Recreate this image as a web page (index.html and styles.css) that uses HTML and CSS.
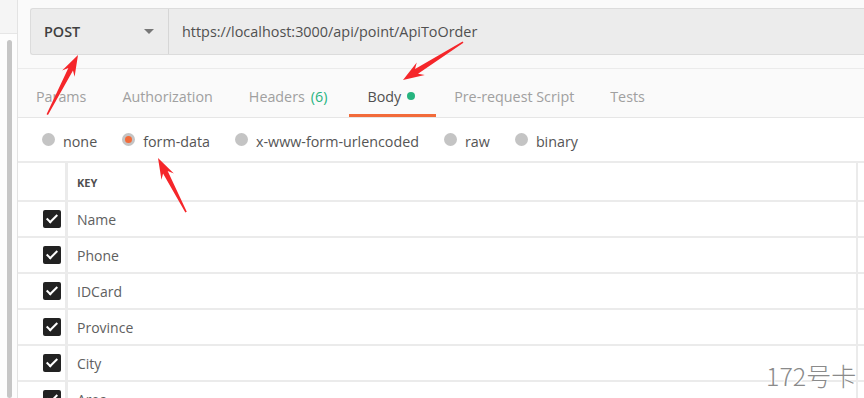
FILE: index.html
```html
<!DOCTYPE html>
<html lang="en">
<head>
    <meta charset="UTF-8">
    <title>Postman - Body</title>
    <link rel="stylesheet" href="styles.css">
</head>
<body>
    <div class="app">
        <div class="sidebar">
            <div class="sidebar-top"></div>
            <div class="scrollbar"></div>
        </div>

        <div class="main">
            <div class="request-bar">
                <div class="method">
                    <span>POST</span>
                    <span class="caret"></span>
                </div>
                <div class="url">https://localhost:3000/api/point/ApiToOrder</div>
            </div>

            <div class="tabs">
                <div class="tab">Params</div>
                <div class="tab">Authorization</div>
                <div class="tab">Headers <span class="count">(6)</span></div>
                <div class="tab active">Body <span class="dot"></span></div>
                <div class="tab">Pre-request Script</div>
                <div class="tab">Tests</div>
            </div>

            <div class="body-types">
                <label class="radio"><span class="circle"></span>none</label>
                <label class="radio checked"><span class="circle"></span>form-data</label>
                <label class="radio"><span class="circle"></span>x-www-form-urlencoded</label>
                <label class="radio"><span class="circle"></span>raw</label>
                <label class="radio"><span class="circle"></span>binary</label>
            </div>

            <div class="table">
                <div class="row head">
                    <div class="check-cell"></div>
                    <div class="key-cell">KEY</div>
                    <div class="value-cell"></div>
                </div>
                <div class="row">
                    <div class="check-cell"><span class="checkbox"></span></div>
                    <div class="key-cell">Name</div>
                    <div class="value-cell"></div>
                </div>
                <div class="row">
                    <div class="check-cell"><span class="checkbox"></span></div>
                    <div class="key-cell">Phone</div>
                    <div class="value-cell"></div>
                </div>
                <div class="row">
                    <div class="check-cell"><span class="checkbox"></span></div>
                    <div class="key-cell">IDCard</div>
                    <div class="value-cell"></div>
                </div>
                <div class="row">
                    <div class="check-cell"><span class="checkbox"></span></div>
                    <div class="key-cell">Province</div>
                    <div class="value-cell"></div>
                </div>
                <div class="row">
                    <div class="check-cell"><span class="checkbox"></span></div>
                    <div class="key-cell">City</div>
                    <div class="value-cell"></div>
                </div>
                <div class="row">
                    <div class="check-cell"><span class="checkbox"></span></div>
                    <div class="key-cell">Area</div>
                    <div class="value-cell"></div>
                </div>
            </div>
        </div>
    </div>

    <!-- annotation arrows drawn over the screenshot -->
    <svg class="arrows" width="864" height="398" viewBox="0 0 864 398">
        <g transform="translate(78 55) rotate(-62.7)">
            <polygon points="0,0 -21,-7 -16,-2.6 -67,-0.8 -67,0.8 -16,2.6 -21,7"/>
        </g>
        <g transform="translate(403 80) rotate(147.7)">
            <polygon points="0,0 -21,-7.5 -16,-2.8 -71,-0.8 -71,0.8 -16,2.8 -21,7.5"/>
        </g>
        <g transform="translate(158 158) rotate(-117.4)">
            <polygon points="0,0 -21,-7 -16,-2.6 -61,-0.8 -61,0.8 -16,2.6 -21,7"/>
        </g>
    </svg>

    <div class="watermark">172号卡</div>
</body>
</html>
```

FILE: styles.css
```css
body {
    margin: 0;
    width: 864px;
    height: 398px;
    overflow: hidden;
    font-family: 'Open Sans', 'Liberation Sans', sans-serif;
    font-size: 14px;
    color: #505050;
    background-color: #fafafa;
    position: relative;
}
.app {
    display: flex;
    height: 398px;
    overflow: hidden;
}
.sidebar {
    width: 17px;
    flex-shrink: 0;
    border-right: 1px solid #e3e3e3;
    background-color: #fdfdfd;
}
.sidebar-top {
    height: 33px;
    background-color: #f5f5f5;
    border-bottom: 1px solid #e6e6e6;
}
.scrollbar {
    width: 5px;
    height: 358px;
    margin: 6px 0 0 7px;
    border-radius: 3px;
    background-color: #c6c6c6;
}
.main {
    flex: 1;
    min-width: 0;
    background-color: #fafafa;
}

/* request bar */
.request-bar {
    display: flex;
    height: 45px;
    margin: 8px 0 0 12px;
    border: 1px solid #dcdcdc;
    border-right: none;
    border-radius: 3px 0 0 3px;
    background-color: #ececec;
}
.method {
    width: 138px;
    flex-shrink: 0;
    display: flex;
    align-items: center;
    justify-content: space-between;
    padding: 0 14px 0 13px;
    box-sizing: border-box;
    border-right: 1px solid #d6d6d6;
    color: #404040;
    font-size: 14.4px;
    font-weight: 600;
}
.caret {
    width: 0;
    height: 0;
    border-left: 5px solid transparent;
    border-right: 5px solid transparent;
    border-top: 5px solid #777;
}
.url {
    display: flex;
    align-items: center;
    padding-left: 13px;
    color: #505050;
    font-size: 14.4px;
    white-space: nowrap;
}

/* tabs */
.tabs {
    display: flex;
    height: 48px;
    margin-top: 13px;
    border-top: 1px solid #ebebeb;
    border-bottom: 1px solid #e6e6e6;
}
.tab {
    display: flex;
    align-items: center;
    gap: 6px;
    padding: 9px 18px 0;
    color: #a0a0a0;
    font-size: 14.3px;
    white-space: nowrap;
    border-bottom: 3px solid transparent;
}
.tab .count {
    color: #26b47f;
}
.tab.active {
    color: #505050;
    margin-left: 4px;
    padding-right: 21px;
    border-bottom-color: #f26b3a;
}
.dot {
    width: 8px;
    height: 8px;
    border-radius: 50%;
    background-color: #26b47f;
}

/* body types */
.body-types {
    display: flex;
    align-items: center;
    gap: 25px;
    height: 45px;
    padding: 3px 0 0 24px;
    box-sizing: border-box;
    background-color: #fff;
    border-bottom: 2px solid #ebebeb;
}
.radio {
    display: flex;
    align-items: center;
    gap: 8px;
    color: #555;
    font-size: 14.3px;
}
.circle {
    width: 13px;
    height: 13px;
    margin-top: -4px;
    border-radius: 50%;
    background-color: #c4c4c4;
    box-sizing: border-box;
}
.radio.checked .circle {
    border: 3px solid #c4c4c4;
    background-color: #f26b3a;
}

/* key/value table */
.table {
    background-color: #fff;
}
.row {
    display: flex;
    height: 34px;
    border-bottom: 2px solid #ebebeb;
}
.row.head {
    height: 37px;
}
.check-cell {
    width: 50px;
    flex-shrink: 0;
    display: flex;
    align-items: center;
    justify-content: flex-end;
    padding-right: 4px;
    box-sizing: border-box;
    border-right: 3px solid #ebebeb;
}
.key-cell {
    width: 790px;
    flex-shrink: 0;
    display: flex;
    align-items: center;
    padding: 1px 0 0 9px;
    box-sizing: border-box;
    border-right: 2px solid #ebebeb;
    color: #606060;
}
.row.head .key-cell {
    font-size: 11px;
    font-weight: 700;
    color: #505050;
    padding-top: 2px;
}
.value-cell {
    flex: 1;
}
.checkbox {
    width: 18px;
    height: 18px;
    border-radius: 2px;
    background-color: #222;
    position: relative;
}
.checkbox::after {
    content: '';
    position: absolute;
    left: 6px;
    top: 2px;
    width: 4px;
    height: 9px;
    border: solid #fff;
    border-width: 0 2.5px 2.5px 0;
    transform: rotate(45deg);
}

/* overlays */
.arrows {
    position: absolute;
    top: 0;
    left: 0;
    pointer-events: none;
}
.arrows polygon {
    fill: #f5262a;
}
.watermark {
    position: absolute;
    left: 766px;
    top: 357px;
    font-family: 'Noto Sans CJK SC', 'DejaVu Sans', sans-serif;
    font-size: 25px;
    font-weight: 300;
    color: #8a8a8a;
    text-shadow: 1px 1px 0 #fff, -1px -1px 0 #fff;
}
```
